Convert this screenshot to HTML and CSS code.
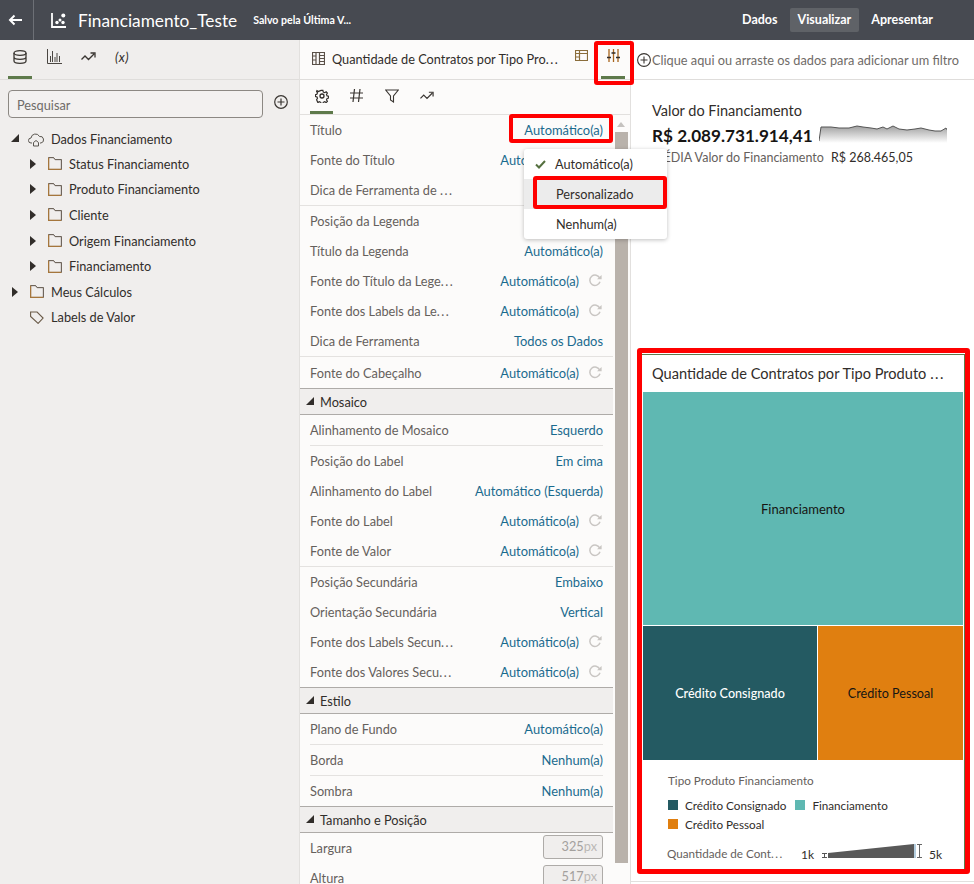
FILE: index.html
```html
<!DOCTYPE html>
<html lang="pt">
<head>
<meta charset="utf-8">
<title>Financiamento_Teste</title>
<link rel="stylesheet" href="styles.css">
</head>
<body>
<svg class="defs" width="0" height="0">
  <defs>
    <symbol id="folder" viewBox="0 0 14 13"><path d="M.6.600h5l1.500 2h6.300v9.800H.6z" fill="none" stroke="#5c5248" stroke-width=".6"/><path d="M.6.600v11.800h12.800" fill="none" stroke="#a5763c" stroke-width="1.300"/><path d="M.6.600h5l1.500 2h6.300v9.800" fill="none" stroke="#6a6057" stroke-width="1"/></symbol>
    <symbol id="reset" viewBox="0 0 14 14"><path d="M11.800 5.200A5.200 5.200 0 1 0 12 8.800" fill="none" stroke="#c9c6c3" stroke-width="1.500"/><path d="M9 6.200h4.600V2z" fill="#c9c6c3"/></symbol>
  </defs>
</svg>
<div class="app">
<header class="topbar">
  <button class="back"><svg width="14" height="12" viewBox="0 0 14 12"><path d="M14 6H2M6.500 1.500 2 6l4.500 4.500" fill="none" stroke="#fff" stroke-width="2"/></svg></button>
  <svg class="logo" width="15" height="15" viewBox="0 0 15 15"><path d="M1 0v14h14" fill="none" stroke="#fff" stroke-width="1.800"/><circle cx="6" cy="9.500" r="1.700" fill="#fff"/><circle cx="9" cy="7" r="1.500" fill="#fff"/><circle cx="12.300" cy="2.500" r="2" fill="#fff"/><circle cx="12" cy="9.500" r="1.700" fill="#fff"/></svg>
  <span class="doc-title">Financiamento_Teste</span>
  <span class="saved">Salvo pela Última V...</span>
  <nav class="modes"><span>Dados</span><span class="active">Visualizar</span><span>Apresentar</span></nav>
</header>
<main class="main">
<aside class="left">
  <div class="tabs lefttabs">
    <span class="tab on"><svg width="14" height="14" viewBox="0 0 14 14" fill="none" stroke="#3a3632" stroke-width="1.300"><ellipse cx="7" cy="3" rx="6" ry="2.300"/><path d="M1 3v8c0 1.300 2.700 2.300 6 2.300s6-1 6-2.300V3M1 7c0 1.300 2.700 2.300 6 2.300S13 8.300 13 7"/></svg></span>
    <span class="tab"><svg width="15" height="15" viewBox="0 0 15 15" fill="none" stroke="#4a4642" stroke-width="1"><path d="M.5 0v14.500H15M3.500 13V7M5.500 13V2M8 13V8M10 13V4M12.500 13V7"/></svg></span>
    <span class="tab"><svg width="15" height="10" viewBox="0 0 15 10" fill="none" stroke="#3a3632" stroke-width="1.300"><path d="M.5 7.500 4 4l3.500 3.500L13 2M9.500 1H14v4.500"/></svg></span>
    <span class="tab fx">(x)</span>
  </div>
  <div class="searchrow">
    <div class="search">Pesquisar</div>
    <svg class="plus" width="14" height="14" viewBox="0 0 14 14" fill="none" stroke="#3a3632" stroke-width="1.200"><circle cx="7" cy="7" r="6.300"/><path d="M7 3.500v7M3.500 7h7"/></svg>
  </div>
  <ul class="tree">
    <li class="t0 first"><i class="tri down"></i><svg class="ic" width="16" height="15" viewBox="0 0 16 15" fill="none" stroke="#5a5650"><path d="M4 11H3a2.500 2.500 0 0 1 0-5 4.500 4.500 0 0 1 8.500-1.500A3.300 3.300 0 0 1 13 11h-1"/><path d="M5.500 14v-3.500L8 8.500l2.500 2V14z"/></svg>Dados Financiamento</li>
    <li class="t1"><i class="tri right"></i><svg class="ic" width="14" height="13"><use href="#folder"/></svg>Status Financiamento</li>
    <li class="t1"><i class="tri right"></i><svg class="ic" width="14" height="13"><use href="#folder"/></svg>Produto Financiamento</li>
    <li class="t1"><i class="tri right"></i><svg class="ic" width="14" height="13"><use href="#folder"/></svg>Cliente</li>
    <li class="t1"><i class="tri right"></i><svg class="ic" width="14" height="13"><use href="#folder"/></svg>Origem Financiamento</li>
    <li class="t1"><i class="tri right"></i><svg class="ic" width="14" height="13"><use href="#folder"/></svg>Financiamento</li>
    <li class="t0"><i class="tri right"></i><svg class="ic" width="14" height="13"><use href="#folder"/></svg>Meus Cálculos</li>
    <li class="t0"><i class="tri none"></i><svg class="ic" width="14" height="13" viewBox="0 0 14 13" fill="none" stroke="#6a5a48" stroke-width="1.100"><path d="M.6 1h6.500l6 6-5 5.400L.6 5.500z"/></svg>Labels de Valor</li>
  </ul>
</aside>
<section class="props">
  <div class="propshead">
    <svg class="vis" width="13" height="13" viewBox="0 0 13 13" fill="none" stroke="#5a5048" stroke-width="1.200"><path d="M.5.500h12v12H.5zM4 .5v12M7.500.5v12M7.500 3.500h5M7.500 6.500h5M7.500 9.500h5M.5 4H4M.5 8H4"/></svg>
    <span class="vistitle">Quantidade de Contratos por Tipo Pro<i class="dots">...</i></span>
    <span class="ptab"><svg width="13" height="11" viewBox="0 0 13 11" fill="none" stroke="#8a6d3b" stroke-width="1.200"><path d="M.5.500h12v10H.5zM4.500.5v10M4.500 3.500h8M.5 3.500h4M.5 7h4"/></svg></span>
    <span class="ptab on"><svg width="13" height="13" viewBox="0 0 13 13" fill="none" stroke-width="1.300"><path stroke="#a8641c" d="M2 0v13M6.500 0v13M11 0v13"/><path stroke="#2f2b28" stroke-width="1.600" d="M0 8.500h4M4.500 4h4M9 8.500h4"/></svg></span>
  </div>
  <div class="subtabs">
    <span class="stab on"><svg width="14" height="14" viewBox="0 0 14 14" fill="none" stroke="#2f2b28" stroke-width="1.300"><circle cx="7" cy="7" r="2"/><path d="M6 .8h2l.4 1.800 1.600.7 1.600-1 1.400 1.400-1 1.600.7 1.600 1.700.4v2l-1.700.4-.7 1.600 1 1.600-1.400 1.400-1.600-1-1.600.7-.4 1.700H6l-.4-1.700-1.600-.7-1.600 1L1 11.100l1-1.600-.7-1.600-1.600-.4v-2l1.600-.4.700-1.600-1-1.600L1.400 1l1.600 1 1.600-.7z" transform="translate(.7 .7) scale(.9)"/></svg></span>
    <span class="stab"><svg width="13" height="13" viewBox="0 0 13 13" fill="none" stroke="#3a3632" stroke-width="1.200"><path d="M4.500 0 3 13M10 0 8.500 13M0 4h13M0 9h13"/></svg></span>
    <span class="stab"><svg width="14" height="14" viewBox="0 0 14 14" fill="none" stroke="#3a3632" stroke-width="1.100"><path d="M.7 1h12.600L8.500 7v6l-3-2V7z"/></svg></span>
    <span class="stab"><svg width="14" height="10" viewBox="0 0 15 10" fill="none" stroke="#3a3632" stroke-width="1.300"><path d="M.5 7.500 4 4l3.500 3.500L13 2M9.500 1H14v4.500"/></svg></span>
  </div>
  <div class="propsbody">
    <div class="scrolllist">
      <div class="row"><span>Título</span><b>Automático(a)</b></div>
      <div class="row"><span>Fonte do Título</span><b class="has-reset">Automático(a)<svg class="reset"><use href="#reset"/></svg></b></div>
      <div class="row sep"><span>Dica de Ferramenta de <i class="dots">...</i></span><b></b></div>
      <div class="row"><span>Posição da Legenda</span><b></b></div>
      <div class="row"><span>Título da Legenda</span><b>Automático(a)</b></div>
      <div class="row"><span>Fonte do Título da Lege<i class="dots">...</i></span><b class="has-reset">Automático(a)<svg class="reset"><use href="#reset"/></svg></b></div>
      <div class="row"><span>Fonte dos Labels da Le<i class="dots">...</i></span><b class="has-reset">Automático(a)<svg class="reset"><use href="#reset"/></svg></b></div>
      <div class="row sep top"><span>Dica de Ferramenta</span><b>Todos os Dados</b></div>
      <div class="row tall"><span>Fonte do Cabeçalho</span><b class="has-reset">Automático(a)<svg class="reset"><use href="#reset"/></svg></b></div>
      <div class="sect"><i class="tri corner"></i>Mosaico</div>
      <div class="row sep inset"><span>Alinhamento de Mosaico</span><b>Esquerdo</b></div>
      <div class="row"><span>Posição do Label</span><b>Em cima</b></div>
      <div class="row"><span>Alinhamento do Label</span><b>Automático (Esquerda)</b></div>
      <div class="row"><span>Fonte do Label</span><b class="has-reset">Automático(a)<svg class="reset"><use href="#reset"/></svg></b></div>
      <div class="row sep"><span>Fonte de Valor</span><b class="has-reset">Automático(a)<svg class="reset"><use href="#reset"/></svg></b></div>
      <div class="row"><span>Posição Secundária</span><b>Embaixo</b></div>
      <div class="row"><span>Orientação Secundária</span><b>Vertical</b></div>
      <div class="row"><span>Fonte dos Labels Secun<i class="dots">...</i></span><b class="has-reset">Automático(a)<svg class="reset"><use href="#reset"/></svg></b></div>
      <div class="row"><span>Fonte dos Valores Secu<i class="dots">...</i></span><b class="has-reset">Automático(a)<svg class="reset"><use href="#reset"/></svg></b></div>
      <div class="sect"><i class="tri corner"></i>Estilo</div>
      <div class="row sep inset"><span>Plano de Fundo</span><b>Automático(a)</b></div>
      <div class="row sep inset"><span>Borda</span><b>Nenhum(a)</b></div>
      <div class="row"><span>Sombra</span><b>Nenhum(a)</b></div>
      <div class="sect"><i class="tri corner"></i>Tamanho e Posição</div>
      <div class="row"><span>Largura</span><em class="num">325<small>px</small></em></div>
      <div class="row"><span>Altura</span><em class="num">517<small>px</small></em></div>
    </div>
    <div class="scrollbar"><i class="up"></i><i class="thumb"></i></div>
    <div class="mark mark-title"></div>
    <div class="menu">
      <div class="mi first"><svg width="11" height="9" viewBox="0 0 11 9" fill="none" stroke="#55703f" stroke-width="2"><path d="M1 4.500 4 7.500 10 1"/></svg>Automático(a)</div>
      <div class="mi hover">Personalizado</div>
      <div class="mi">Nenhum(a)</div>
    </div>
    <div class="mark mark-person"></div>
  </div>
  <div class="mark mark-tab"></div>
</section>
<section class="canvas">
  <div class="filterbar"><svg width="14" height="14" viewBox="0 0 14 14" fill="none" stroke="#3a3632" stroke-width="1.100"><circle cx="7" cy="7" r="6.400"/><path d="M7 3.500v7M3.500 7h7"/></svg>Clique aqui ou arraste os dados para adicionar um filtro</div>
  <div class="canvasbody">
    <div class="kpi">
      <div class="kpi-title">Valor do Financiamento</div>
      <div class="kpi-main"><strong>R$ 2.089.731.914,41</strong>
        <svg class="spark" width="128" height="20" viewBox="0 0 128 20"><defs><linearGradient id="g" x1="0" y1="0" x2="0" y2="1"><stop offset="0" stop-color="#a0a0a0"/><stop offset="1" stop-color="#fff"/></linearGradient></defs><path d="M0 18 2 4l10 0 8 1 10 0 8-2 6 1 8 1 6 1 6-2 4 2 6-3 6 3 8 1 8-1 6-1 8 2 6 1 6 0 5-3 3 5V20H0z" fill="url(#g)"/><path d="M0 18 2 4l10 0 8 1 10 0 8-2 6 1 8 1 6 1 6-2 4 2 6-3 6 3 8 1 8-1 6-1 8 2 6 1 6 0 5-3 3 5" fill="none" stroke="#555"/></svg>
      </div>
      <div class="kpi-sub"><span>MÉDIA Valor do Financiamento</span><span class="v">R$ 268.465,05</span></div>
    </div>
    <div class="viz">
      <div class="viz-inner">
        <div class="viz-title">Quantidade de Contratos por Tipo Produto <i class="dots">...</i></div>
        <div class="treemap">
          <div class="tile teal">Financiamento</div>
          <div class="tmrow">
            <div class="tile dark">Crédito Consignado</div>
            <div class="tile orange">Crédito Pessoal</div>
          </div>
        </div>
        <div class="legend">
          <div class="lg-title">Tipo Produto Financiamento</div>
          <div class="lg-items">
            <span><i class="sw c1"></i>Crédito Consignado</span><span><i class="sw c2"></i>Financiamento</span>
            <span class="full"><i class="sw c3"></i>Crédito Pessoal</span>
          </div>
          <div class="lg-size">
            <span class="lg-name">Quantidade de Cont<i class="dots">...</i></span>
            <span class="lg-k">1k</span>
            <svg width="104" height="18" viewBox="0 0 104 18" fill="none"><path d="M2 9.500h5M4.500 9.500v4M2 13.500h5" stroke="#555"/><path d="M8 14V9L94 0v14z" fill="#595959"/><path d="M95 0v14" stroke="#6b9ec0"/><path d="M97 .5h5M99.500 .5v13M97 13.500h5" stroke="#666"/></svg>
            <span class="lg-k">5k</span>
          </div>
        </div>
      </div>
    </div>
  </div>
</section>
</main>
</div>
</body>
</html>
```
FILE: styles.css
```css
*{box-sizing:border-box}
html,body{margin:0;height:100%;overflow:hidden}
body{font-family:Lato,"Noto Sans",sans-serif;font-size:12.75px;color:#312d2a;background:#fff}
.defs{position:absolute}
.dots{font-style:normal;letter-spacing:1.500px}
.app{width:974px;height:884px;display:flex;flex-direction:column;overflow:hidden}
.topbar{height:40px;flex:none;background:#474a51;color:#fff;display:flex;align-items:center}
.back{width:34px;height:40px;border:0;border-right:1px solid #6d7076;background:none;padding:0 3px 0 0;display:flex;align-items:center;justify-content:center}
.logo{margin-left:17px}
.doc-title{font-size:17.250px;margin-left:12px}
.saved{font-size:10.600px;font-weight:700;margin-left:16px}
.modes{margin-left:auto;margin-right:33px;display:flex;align-items:center;font-size:12.500px;font-weight:700}
.modes span{padding:0 8px;height:24px;line-height:24px;margin-left:4px;border-radius:2px}
.modes .active{background:#5f6267}
.main{flex:1;display:flex;min-height:0}
.left{width:300px;flex:none;background:#f0eeed;border-right:1px solid #e2e0de}
.tabs{display:flex}
.lefttabs{height:40px;border-bottom:1px solid #dfdddb;padding-left:8px;gap:10px}
.tab{width:24px;height:39px;display:flex;align-items:center;justify-content:center;padding-bottom:3px;border-bottom:3px solid transparent}
.tab.on{border-bottom-color:#5e7a4b}
.fx{font-style:italic;font-size:13px;letter-spacing:.5px}
.searchrow{display:flex;align-items:center;padding:10px 0 0 8px;gap:11px}
.search{width:255px;height:28px;border:1px solid #8c8883;border-radius:4px;padding:0 8px;line-height:28px;color:#6f6b68;background:#f3f1f0}
.plus{margin-top:-4px}
.tree{list-style:none;margin:9px 0 0;padding:0}
.tree li{display:flex;align-items:center;height:25.600px}
.tree li.first{height:24px}
.tree .ic{margin-right:7px;flex:none}
.t0{padding-left:12px}
.t1{padding-left:30px}
.tri{width:6px;height:10px;margin-right:12px;flex:none;display:block}
.tri.right{border-left:6px solid #312d2a;border-top:5px solid transparent;border-bottom:5px solid transparent}
.tri.down,.tri.corner{width:8px;height:8px;border-left:8px solid transparent;border-bottom:8px solid #312d2a}
.tri.down{margin:-2px 9px 0 -1px}
.tree .first .ic{margin-right:7px}
.tri.none{visibility:hidden}
.props{width:331px;flex:none;background:#fcfbfa;border-right:1px solid #e2e0de;position:relative;display:flex;flex-direction:column}
.propshead{height:40px;flex:none;border-bottom:1px solid #dfdddb;display:flex;align-items:center;padding-left:12px;background:#fcfbfa}
.vis{margin-right:7px;margin-bottom:2px;flex:none}
.vistitle{width:237px;flex:none;white-space:nowrap;margin-bottom:2px}
.ptab{width:24px;height:39px;flex:none;display:flex;align-items:center;justify-content:center;padding-bottom:5px;border-bottom:3px solid transparent;margin-right:8px}
.ptab.on{border-bottom-color:#5e7a4b;margin-right:0}
.subtabs{height:35px;flex:none;border-bottom:1px solid #e2e0de;display:flex;padding-left:10px;gap:12px}
.stab{width:23px;height:34px;display:flex;align-items:center;justify-content:center;border-bottom:3px solid transparent}
.stab.on{border-bottom-color:#5e7a4b}
.propsbody{flex:1;min-height:0;position:relative;display:flex}
.scrolllist{width:313px;flex:none;height:769px;overflow:hidden}
.row{height:30px;padding:0 10px;display:flex;align-items:center;justify-content:space-between;position:relative;color:#65605c}
.row.tall{height:31px}
.row.sep{height:31px;padding-bottom:1px}
.row.sep::after{content:"";position:absolute;left:0;right:0;bottom:0;height:1px;background:#e4e2e0}
.row.inset::after{left:10px;right:10px}
.row b{font-weight:400;font-size:12.900px;color:#1a6a8e;display:flex;align-items:center;position:relative}
.reset{position:absolute;right:-23px;top:50%;margin-top:-8px;width:14px;height:14px}
.row b.has-reset{margin-right:24px}
.num{font-style:normal;width:60px;height:24px;border:1px solid #aeaba8;border-radius:3px;background:#f0eeed;color:#a3a09d;text-align:right;padding-right:5px;line-height:21px;margin-top:-2px;flex:none}
.num small{font-size:12.750px;color:#bbb8b5}
.sect{height:27px;background:#f0eeed;border-top:1px solid #aeaba8;border-bottom:1px solid #aeaba8;display:flex;align-items:center;padding-left:6px;color:#312d2a}
.tri.corner{margin-right:6px;margin-top:-2px}
.scrollbar{width:13px;margin-left:2px;flex:none;position:relative}
.scrollbar .up{position:absolute;top:7px;left:0;width:0;height:0;border:4px solid transparent;border-bottom:5px solid #c5c2bf;border-top:0;margin-left:2px}
.thumb{position:absolute;left:0;top:17px;width:13px;height:731px;background:#b9b2ab}
.menu{position:absolute;left:224px;top:34px;width:143px;background:#fff;border-radius:3px;box-shadow:0 1px 4px rgba(0,0,0,.25);z-index:3}
.mi{height:30px;display:flex;align-items:center;padding-left:32px;position:relative}
.mi.first{padding-left:31px}
.mi svg{position:absolute;left:11px;top:11px}
.mi.hover{background:#ececec}
.mark{position:absolute;border:4px solid #f00;border-radius:3px;z-index:5;pointer-events:none}
.mark-title{left:208.500px;top:-1px;width:104px;height:29px}
.mark-person{left:233px;top:61px;width:134px;height:33px}
.mark-tab{left:293.500px;top:1px;width:40px;height:44px}
.canvas{flex:1;min-width:0;display:flex;flex-direction:column;background:#fff;position:relative}
.filterbar{height:40px;flex:none;border-bottom:1px solid #dfdddb;display:flex;align-items:center;padding-left:6px;color:#6f6b68;gap:1px}
.canvasbody{height:802px;flex:none;padding:0 0 0 6px;border-bottom:1px solid #e2e0de}
.kpi{height:268px;padding:22px 0 0 15px}
.kpi-title{font-size:14.500px;line-height:18px;color:#312d2a}
.kpi-main{display:flex;align-items:flex-end;margin-top:5px}
.kpi-main strong{font-size:17.150px;line-height:22px;color:#161513}
.spark{margin-left:6px;margin-bottom:4px;margin-top:-4px}
.kpi-sub{margin-top:3px;font-size:12.500px;line-height:16px;color:#65605c;display:flex;gap:7px}
.kpi-sub .v{color:#312d2a}
.viz{width:333px;height:526px;border:5px solid #f00;border-radius:3px;padding-top:1px}
.viz-inner{height:100%;border-top:1px solid #5e7a4b;border-right:1px solid #5e7a4b;display:flex;flex-direction:column;padding:0 1px 0 1px}
.viz-title{height:37px;line-height:37px;font-size:14.600px;padding-left:9px;color:#312d2a;flex:none;white-space:nowrap}
.treemap{height:368px;flex:none;display:flex;flex-direction:column;gap:1px}
.tile{display:flex;align-items:center;justify-content:center;font-size:12.600px;color:#161513}
.teal{height:233px;background:#5fb8b2;font-size:13px}
.tmrow{display:flex;gap:1px;flex:1}
.dark{width:174px;background:#245a62;color:#fff;font-weight:500;padding-top:1px}
.orange{flex:1;background:#e07f10;padding-top:1px}
.legend{padding:13px 0 0 25px;font-size:11.700px}
.lg-title{color:#65605c;line-height:14px}
.lg-items{display:flex;flex-wrap:wrap;margin-top:10px;gap:3px 9px}
.lg-items span{display:flex;align-items:center;height:16px}
.lg-items .full{width:100%}
.sw{width:10px;height:10px;margin-right:7px;flex:none}
.c1{background:#245a62}.c2{background:#5fb8b2}.c3{background:#e07f10}
.lg-size{display:flex;align-items:center;margin-top:12px;margin-left:-1px}
.lg-name{color:#65605c;width:134px;white-space:nowrap}
.lg-k{color:#312d2a;font-size:12px;margin-top:2px}
.lg-size svg{margin:0 5px 0 6px}
```
